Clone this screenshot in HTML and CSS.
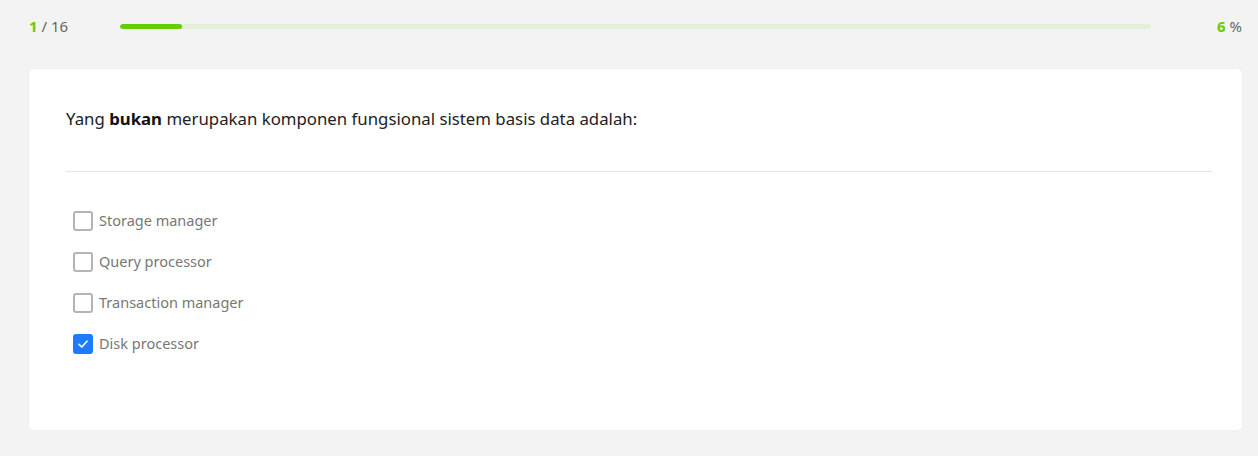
FILE: index.html
```html
<!DOCTYPE html>
<html>
<head>
<meta charset="utf-8">
<link rel="stylesheet" href="styles.css">
</head>
<body>
<div class="page">
  <div class="topbar">
    <div class="count"><span class="hl">1</span> / 16</div>
    <div class="track"><div class="fill" style="width:6%"></div></div>
    <div class="pct"><span class="hl">6</span> %</div>
  </div>
  <div class="card">
    <p class="question">Yang <b>bukan</b> merupakan komponen fungsional sistem basis data adalah:</p>
    <hr class="divider">
    <ul class="options">
      <li class="option"><span class="box"></span><span class="label">Storage manager</span></li>
      <li class="option"><span class="box"></span><span class="label">Query processor</span></li>
      <li class="option"><span class="box"></span><span class="label">Transaction manager</span></li>
      <li class="option"><span class="box checked"><svg viewBox="0 0 20 20" width="20" height="20"><path d="M6 10.3 L8.8 13 L14 7.2" fill="none" stroke="#fff" stroke-width="1.6" stroke-linecap="round" stroke-linejoin="round"/></svg></span><span class="label">Disk processor</span></li>
    </ul>
  </div>
</div>
</body>
</html>
```
FILE: styles.css
```css
html, body { margin: 0; padding: 0; }
body {
  background: #f3f3f3;
  font-family: "Noto Sans", "Open Sans", sans-serif;
  width: 1258px;
  height: 456px;
  overflow: hidden;
}
.page { padding: 14px 16px 0 29px; }
.topbar {
  display: flex;
  align-items: center;
  height: 24px;
}
.count {
  width: 91px;
  font-size: 15px;
  color: #666;
}
.hl { color: #66cc00; font-weight: 700; }
.track {
  width: 1031px;
  height: 5px;
  border-radius: 3px;
  background: #e3efd9;
  overflow: hidden;
}
.fill {
  height: 100%;
  background: #66cc00;
  border-radius: 3px;
}
.pct {
  flex: 1;
  text-align: right;
  font-size: 15px;
  color: #666;
}
.card {
  margin-top: 31px;
  width: 1213px;
  height: 361px;
  box-sizing: border-box;
  background: #fff;
  border-radius: 5px;
  box-shadow: 0 0 2px rgba(0,0,0,0.05);
  padding: 0 29px 0 37px;
}
.question {
  margin: 0;
  padding-top: 38px;
  font-size: 16.8px;
  line-height: 24px;
  color: #222;
}
.question b { font-weight: 700; color: #111; }
.divider {
  margin: 40px 0 0 0;
  border: 0;
  border-top: 1px solid #e6e6e6;
}
.options {
  list-style: none;
  margin: 0;
  padding: 39px 0 0 7px;
}
.option {
  display: flex;
  align-items: center;
  height: 20px;
  margin-bottom: 21px;
}
.box {
  width: 20px;
  height: 20px;
  box-sizing: border-box;
  border: 2px solid #b4b4b4;
  border-radius: 3px;
  margin-right: 6px;
  flex: none;
  display: flex;
}
.box.checked {
  background: #1a7cff;
  border-color: #1a7cff;
  align-items: center;
  justify-content: center;
}
.box.checked svg { flex: none; }
.label {
  font-size: 14.5px;
  line-height: 18px;
  margin-top: -2px;
  color: #777;
}
```
